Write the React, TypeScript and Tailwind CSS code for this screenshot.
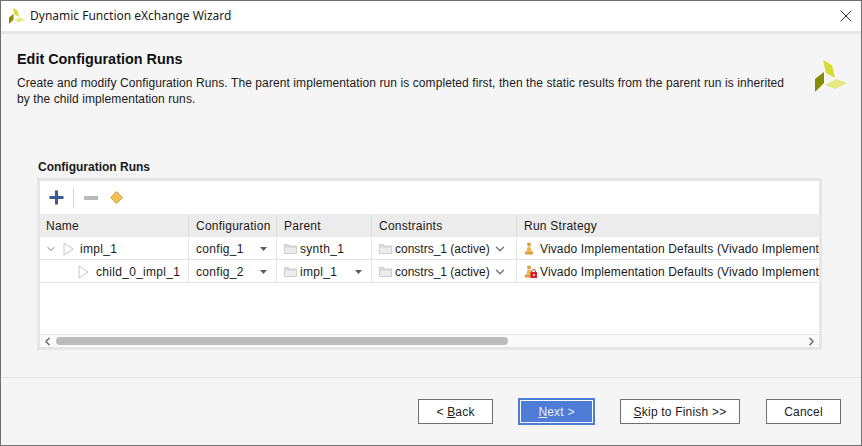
import { ChevronDown, ChevronLeft, ChevronRight, X } from "lucide-react";

const COLS = "grid grid-cols-[149px_88px_95px_145px_302px]";
const FONT = "font-['Liberation_Sans',Arial,sans-serif]";

function Logo({ size }: { size: number }) {
  return (
    <svg width={size} height={size} viewBox="0 0 32 32" className="shrink-0">
      <polygon points="8,0 17,5 20,18 11,13" fill="#d4dc32" />
      <polygon points="9,12 9,23 0,32 0,19" fill="#8a8c00" />
      <polygon points="21,19 32,23 20,29 10,25" fill="#e4ea80" />
    </svg>
  );
}

function Folder() {
  return (
    <svg width="13" height="11" viewBox="0 0 13 11" className="shrink-0">
      <path d="M0.5 1.5h4l1 1.5h7v7.5h-12z" fill="#dcdcdc" stroke="#cfcfcf" />
      <path d="M1 5h11v5h-11z" fill="#ececec" />
    </svg>
  );
}

function Caret() {
  return (
    <svg width="7" height="4" viewBox="0 0 7 4" className="shrink-0">
      <polygon points="0,0 7,0 3.5,4" fill="#5c5c5c" />
    </svg>
  );
}

function TreeArrow() {
  return (
    <svg width="11" height="14" viewBox="0 0 11 14" className="shrink-0">
      <polygon points="1,1 10,7 1,13" fill="#fff" stroke="#c4c4c4" />
    </svg>
  );
}

function Pawn({ locked }: { locked?: boolean }) {
  return (
    <svg width="13" height="13" viewBox="0 0 13 13" className="shrink-0">
      <circle cx="5" cy="2.5" r="2" fill="#e0a030" />
      <path d="M3.5 5h3l1 4.5h-5z" fill="#eeb548" />
      <rect x="1" y="9.5" width="8" height="3" fill="#e0a030" />
      {locked && (
        <>
          <path d="M7.8 7V5.8a1.9 1.9 0 0 1 3.6 0V7" fill="none" stroke="#d02030" />
          <rect x="6.5" y="7" width="6.5" height="6" fill="#d8202c" />
          <rect x="9" y="9" width="1.5" height="2" fill="#fff" />
        </>
      )}
    </svg>
  );
}

function Row({
  indent,
  expand,
  name,
  config,
  parent,
  parentCaret,
  locked,
}: {
  indent: string;
  expand?: boolean;
  name: string;
  config: string;
  parent: string;
  parentCaret?: boolean;
  locked?: boolean;
}) {
  const cell = "flex items-center border-r border-[#e4e4e4] overflow-hidden whitespace-nowrap pt-px";
  return (
    <div className={`${COLS} h-[23px] border-b border-[#e4e4e4] text-[12px] text-[#1a1a1a]`}>
      <div className={`${cell} ${indent} tracking-[0.3px]`}>
        {expand && <ChevronDown size={12} strokeWidth={2} className="mr-[6px] text-[#777]" />}
        <TreeArrow />
        <span className={expand ? "ml-[6px]" : "ml-[7px]"}>{name}</span>
      </div>
      <div className={`${cell} justify-between pl-[7px] pr-[9px] tracking-[0.3px]`}>
        <span>{config}</span>
        <Caret />
      </div>
      <div className={`${cell} justify-between pl-[7px] pr-[9px]`}>
        <span className="flex items-center gap-[3px] tracking-[0.3px]">
          <Folder />
          {parent}
        </span>
        {parentCaret && <Caret />}
      </div>
      <div className={`${cell} pl-[7px]`}>
        <Folder />
        <span className="ml-[3px]">constrs_1 (active)</span>
        <ChevronDown size={14} strokeWidth={2.5} className="ml-[3px] text-[#777]" />
      </div>
      <div className="flex items-center overflow-hidden whitespace-nowrap pl-[7px] pt-px tracking-[0.14px]">
        <span className="flex w-[16px] shrink-0">
          <Pawn locked={locked} />
        </span>
        <span>Vivado Implementation Defaults (Vivado Implement</span>
      </div>
    </div>
  );
}

function FooterButton({ label, hot, rest, primary, width, before }: {
  label?: string;
  hot?: string;
  rest?: string;
  primary?: boolean;
  width: string;
  before?: string;
}) {
  if (primary) {
    return (
      <div className={`${width} h-[27px] border-[2px] border-[#4d7bd6] bg-[#4d7bd6] flex`}>
        <div className="flex-1 border border-white flex items-center justify-center pt-px text-[12px] text-[#e8eefb] tracking-[0.2px]">
          <span className="underline">{hot}</span>
          {rest}
        </div>
      </div>
    );
  }
  return (
    <div className={`${width} h-[25px] border border-[#707070] bg-white flex items-center justify-center pt-px text-[12px] text-[#1a1a1a] tracking-[0.2px] whitespace-pre`}>
      {before}
      {hot && <span className="underline">{hot}</span>}
      {rest}
      {label}
    </div>
  );
}

export default function App() {
  return (
    <div className={`${FONT} w-[862px] h-[446px] bg-[#f5f5f5] border border-[#707070] flex flex-col overflow-hidden`}>
      <div className="h-[30px] bg-white flex items-center pl-[8px] pr-[5px] shrink-0">
        <Logo size={16} />
        <span className="ml-[5px] font-['Noto_Sans',sans-serif] text-[12px] text-[#1a1a1a]">
          Dynamic Function eXchange Wizard
        </span>
        <X size={20} strokeWidth={1} className="ml-auto text-black" />
      </div>
      <div className="h-[3px] bg-[#e6e6e6] shrink-0" />

      <div className="flex-1 flex flex-col pl-[16px] pr-[15px] pt-[17px]">
        <div className="flex justify-between">
          <div className="w-[775px]">
            <h1 className="text-[14.4px] leading-[16px] font-bold text-[#111]">Edit Configuration Runs</h1>
            <p className="mt-[8px] text-[12px] leading-[16px] text-[#1a1a1a] tracking-[0.09px]">
              Create and modify Configuration Runs. The parent implementation run is completed first, then the static results from the parent run is inherited by the child implementation runs.
            </p>
          </div>
          <div className="mt-[9px] mr-[-1px]">
            <Logo size={32} />
          </div>
        </div>

        <div className="mt-[53px] ml-[20px] w-[785px]">
          <h2 className="pl-[1px] text-[12px] leading-[14px] font-bold text-[#1a1a1a]">Configuration Runs</h2>
          <div className="mt-[4px] h-[172px] border-[3px] border-[#e6e6e6] bg-white flex flex-col">
            <div className="h-[33px] flex items-center pl-[9px] shrink-0">
              <svg width="15" height="15" viewBox="0 0 15 15">
                <path d="M6 0.5h3v5.5h5.5v3h-5.5v5.5h-3v-5.5h-5.5v-3h5.5z" fill="#3c5a92" />
              </svg>
              <div className="ml-[9px] h-[20px] w-px bg-[#d4d4d4]" />
              <div className="ml-[10px] h-[4px] w-[14px] bg-[#b9b9b9]" />
              <svg width="13" height="13" viewBox="0 0 13 13" className="ml-[12px]">
                <polygon points="6.5,0.5 12.5,6.5 6.5,12.5 0.5,6.5" fill="#f5bf57" stroke="#d9a13e" />
              </svg>
            </div>

            <div className={`${COLS} h-[23px] bg-[#ececec] text-[12px] text-[#1a1a1a] tracking-[0.25px] shrink-0`}>
              {["Name", "Configuration", "Parent", "Constraints", "Run Strategy"].map((h) => (
                <div key={h} className="flex items-center pl-[7px] pt-px first:pl-[6px] border-r border-[#e0e0e0] last:border-r-0 whitespace-nowrap overflow-hidden">
                  {h}
                </div>
              ))}
            </div>

            <div className="flex-1 overflow-hidden">
              <Row indent="pl-[5px]" expand name="impl_1" config="config_1" parent="synth_1" />
              <Row indent="pl-[38px]" name="child_0_impl_1" config="config_2" parent="impl_1" parentCaret locked />
            </div>

            <div className="h-[13px] border-t border-[#e4e4e4] bg-[#fafafa] flex items-center shrink-0">
              <ChevronLeft size={13} strokeWidth={2.5} className="ml-[1px] text-[#666]" />
              <div className="ml-[2px] h-[8px] w-[452px] rounded-full bg-[#bcbcbc]" />
              <ChevronRight size={13} strokeWidth={2.5} className="ml-auto mr-[1px] text-[#666]" />
            </div>
          </div>
        </div>
      </div>

      <div className="h-[68px] border-t border-[#e4e4e4] shrink-0 flex items-center pl-[417px] pb-[1px]">
        <FooterButton width="w-[75px]" before="< " hot="B" rest="ack" />
        <div className="ml-[25px]">
          <FooterButton primary width="w-[77px]" hot="N" rest="ext >" />
        </div>
        <div className="ml-[25px]">
          <FooterButton width="w-[120px]" hot="S" rest="kip to Finish >>" />
        </div>
        <div className="ml-[26px]">
          <FooterButton width="w-[75px]" label="Cancel" />
        </div>
      </div>
    </div>
  );
}
